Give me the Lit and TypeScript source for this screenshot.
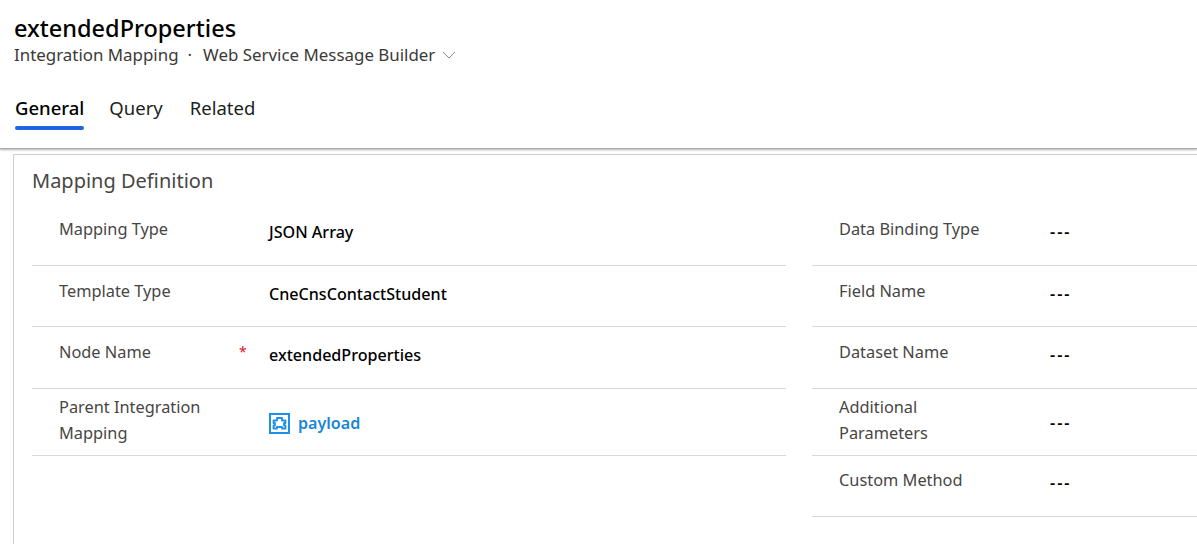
import { LitElement, html, css } from "lit";
import { customElement } from "lit/decorators.js";

type Row = { label: string; value: string; req?: boolean; link?: boolean; tall?: boolean; low?: boolean; h: number };

const left: Row[] = [
  { label: "Mapping Type", value: "JSON Array", h: 61 },
  { label: "Template Type", value: "CneCnsContactStudent", low: true, h: 61 },
  { label: "Node Name", value: "extendedProperties", req: true, h: 62 },
  { label: "Parent Integration Mapping", value: "payload", link: true, tall: true, h: 67 },
];
const right: Row[] = [
  { label: "Data Binding Type", value: "---", h: 61 },
  { label: "Field Name", value: "---", low: true, h: 61 },
  { label: "Dataset Name", value: "---", h: 62 },
  { label: "Additional Parameters", value: "---", tall: true, h: 67 },
  { label: "Custom Method", value: "---", h: 61 },
];

@customElement("app-root")
export class AppRoot extends LitElement {
  static styles = css`
    :host {
      display: block;
      width: 1197px;
      height: 544px;
      overflow: hidden;
      background: #fff;
      font-family: "Noto Sans", "Open Sans", sans-serif;
      color: #000;
    }
    .header {
      height: 149px;
      box-sizing: border-box;
      padding: 13px 0 0 14px;
      border-bottom: 1px solid #a8a8a8;
      box-shadow: 0 1px 2px rgba(0, 0, 0, 0.3);
    }
    .title {
      font-size: 23.5px;
      line-height: 30px;
      font-weight: 500;
      color: #000;
    }
    .crumbs {
      display: flex;
      align-items: center;
      font-size: 16.9px;
      line-height: 24px;
      color: #3b3a39;
    }
    .dot { margin: 0 11px 0 9px; }
    .chev { margin-left: 7px; display: block; }
    .tabs {
      display: flex;
      gap: 25px;
      margin-top: 26px;
      padding-left: 1px;
      font-size: 18.5px;
      line-height: 30px;
    }
    .tab { height: 37px; box-sizing: border-box; color: #201f1e; }
    .tab.related { margin-left: 2px; }
    .tab.on {
      font-weight: 500;
      color: #000;
      position: relative;
    }
    .tab.on::after {
      content: "";
      position: absolute;
      left: 0;
      right: 0;
      bottom: 0;
      height: 4px;
      border-radius: 2px;
      background: #1f65e0;
    }
    .card {
      margin: 5px 0 0 13px;
      height: 400px;
      border-top: 1px solid #d0d0d0;
      border-left: 1px solid #d0d0d0;
      padding: 13px 0 0 18px;
    }
    .section {
      font-size: 20px;
      line-height: 26px;
      color: #484644;
      margin-bottom: 11px;
    }
    .cols {
      display: grid;
      grid-template-columns: 754px 400px;
      column-gap: 26px;
    }
    .row {
      display: grid;
      grid-template-columns: 210px 1fr;
      align-items: center;
      border-bottom: 1px solid #d8d8d8;
      box-sizing: border-box;
      padding-left: 27px;
    }
    .label {
      position: relative;
      font-size: 16.35px;
      line-height: 26px;
      color: #484644;
      width: 160px;
      margin-top: -12px;
    }
    .low .label { margin-top: -10px; }
    .tall .label { margin-top: -4px; }
    .star {
      position: absolute;
      left: 180px;
      top: 0;
      color: #e0102c;
      font-size: 14px;
    }
    .value {
      display: flex;
      align-items: center;
      font-size: 16.1px;
      font-weight: 500;
      color: #000;
      margin-top: -6px;
    }
    .low .value { margin-top: -4px; }
    .tall .value { margin-top: 2px; }
    .value.dash { font-weight: 600; letter-spacing: 2px; padding-left: 1px; }
    .value.link { color: #1a86d8; font-weight: 600; }
    .value svg { margin-right: 8px; display: block; }
  `;

  private renderRow(r: Row) {
    return html`<div class="row ${r.tall ? "tall" : ""} ${r.low ? "low" : ""}" style="height:${r.h}px">
      <div class="label">${r.label}${r.req ? html`<span class="star">*</span>` : ""}</div>
      <div class="value ${r.link ? "link" : ""} ${r.value === "---" ? "dash" : ""}">
        ${r.link
          ? html`<svg width="21" height="21" viewBox="0 0 21 21" fill="none" stroke="#1f8fe8">
              <rect x="1" y="1" width="19" height="19" stroke-width="2"></rect>
              <path
                stroke-width="1.8"
                stroke-linejoin="round"
                d="M4.500 7.500H8V5H13V7.500H16.500V10H15V12.500H16.500V15.500H13V14H8V15.500H4.500V12.500H6V10H4.500Z"
              ></path>
            </svg>`
          : ""}
        ${r.value}
      </div>
    </div>`;
  }

  render() {
    return html`
      <div class="header">
        <div class="title">extendedProperties</div>
        <div class="crumbs">
          <span>Integration Mapping</span><span class="dot">·</span><span>Web Service Message Builder</span>
          <svg class="chev" width="14" height="8" viewBox="0 0 14 8" fill="none" stroke="#8a8886">
            <path d="M1 1l6 6 6-6"></path>
          </svg>
        </div>
        <div class="tabs">
          <div class="tab on">General</div>
          <div class="tab">Query</div>
          <div class="tab related">Related</div>
        </div>
      </div>
      <div class="card">
        <div class="section">Mapping Definition</div>
        <div class="cols">
          <div>${left.map((r) => this.renderRow(r))}</div>
          <div>${right.map((r) => this.renderRow(r))}</div>
        </div>
      </div>
    `;
  }
}
